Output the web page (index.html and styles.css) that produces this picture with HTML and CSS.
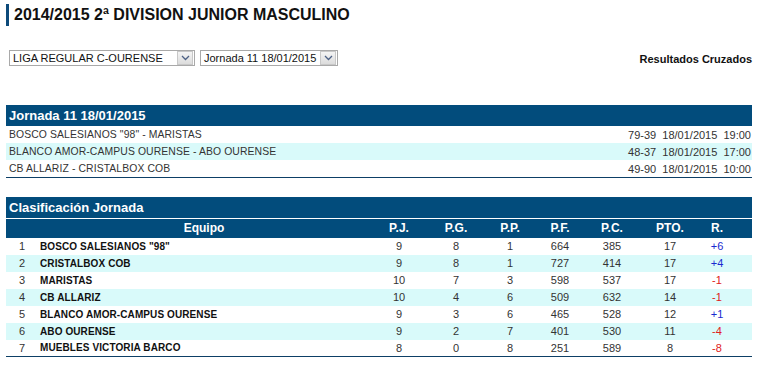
FILE: index.html
```html
<!DOCTYPE html>
<html>
<head>
<meta charset="utf-8">
<link rel="stylesheet" href="styles.css">
</head>
<body>
<div class="page">
  <h1 class="title">2014/2015 2ª DIVISION JUNIOR MASCULINO</h1>
  <div class="filters">
    <div class="selects">
      <div class="select sel1"><span class="sel-text">LIGA REGULAR C-OURENSE</span><span class="sel-btn"><svg width="9" height="6" viewBox="0 0 9 6"><path d="M1 1 L4.5 4.5 L8 1" fill="none" stroke="#4d6185" stroke-width="1.3"/></svg></span></div>
      <div class="select sel2"><span class="sel-text">Jornada 11 18/01/2015</span><span class="sel-btn"><svg width="9" height="6" viewBox="0 0 9 6"><path d="M1 1 L4.5 4.5 L8 1" fill="none" stroke="#4d6185" stroke-width="1.3"/></svg></span></div>
    </div>
    <a class="cross">Resultados Cruzados</a>
  </div>

  <section class="block results">
    <div class="block-head">Jornada 11 18/01/2015</div>
    <div class="match"><span class="teams">BOSCO SALESIANOS "98" - MARISTAS</span><span class="res">79-39&nbsp;&nbsp;18/01/2015&nbsp;&nbsp;19:00</span></div>
    <div class="match alt"><span class="teams">BLANCO AMOR-CAMPUS OURENSE - ABO OURENSE</span><span class="res">48-37&nbsp;&nbsp;18/01/2015&nbsp;&nbsp;17:00</span></div>
    <div class="match"><span class="teams">CB ALLARIZ - CRISTALBOX COB</span><span class="res">49-90&nbsp;&nbsp;18/01/2015&nbsp;&nbsp;10:00</span></div>
  </section>

  <section class="block standings">
    <div class="block-head">Clasificación Jornada</div>
    <table class="tbl">
      <colgroup>
        <col class="c-rank"><col class="c-team"><col class="c-pj"><col class="c-pg"><col class="c-pp"><col class="c-pf"><col class="c-pc"><col class="c-pto"><col class="c-r"><col class="c-fill">
      </colgroup>
      <thead>
        <tr><th></th><th>Equipo</th><th>P.J.</th><th>P.G.</th><th>P.P.</th><th>P.F.</th><th>P.C.</th><th>PTO.</th><th>R.</th><th></th></tr>
      </thead>
      <tbody>
        <tr><td>1</td><td class="team">BOSCO SALESIANOS "98"</td><td>9</td><td>8</td><td>1</td><td>664</td><td>385</td><td>17</td><td class="pos">+6</td><td></td></tr>
        <tr class="alt"><td>2</td><td class="team">CRISTALBOX COB</td><td>9</td><td>8</td><td>1</td><td>727</td><td>414</td><td>17</td><td class="pos">+4</td><td></td></tr>
        <tr><td>3</td><td class="team">MARISTAS</td><td>10</td><td>7</td><td>3</td><td>598</td><td>537</td><td>17</td><td class="neg">-1</td><td></td></tr>
        <tr class="alt"><td>4</td><td class="team">CB ALLARIZ</td><td>10</td><td>4</td><td>6</td><td>509</td><td>632</td><td>14</td><td class="neg">-1</td><td></td></tr>
        <tr><td>5</td><td class="team">BLANCO AMOR-CAMPUS OURENSE</td><td>9</td><td>3</td><td>6</td><td>465</td><td>528</td><td>12</td><td class="pos">+1</td><td></td></tr>
        <tr class="alt"><td>6</td><td class="team">ABO OURENSE</td><td>9</td><td>2</td><td>7</td><td>401</td><td>530</td><td>11</td><td class="neg">-4</td><td></td></tr>
        <tr><td>7</td><td class="team">MUEBLES VICTORIA BARCO</td><td>8</td><td>0</td><td>8</td><td>251</td><td>589</td><td>8</td><td class="neg">-8</td><td></td></tr>
      </tbody>
    </table>
  </section>
</div>
</body>
</html>
```

FILE: styles.css
```css
* { box-sizing: border-box; }
html, body { margin: 0; padding: 0; background: #fff; }
body { font-family: "Liberation Sans", Arial, sans-serif; color: #222; }
.page { width: 759px; padding: 4px 7px 0 6px; }

.title {
  margin: 0;
  height: 22px;
  border-left: 3px solid #0d4a7a;
  padding-left: 5px;
  font-size: 16px;
  line-height: 22px;
  font-weight: bold;
  color: #111;
}

.filters {
  display: flex;
  justify-content: space-between;
  align-items: center;
  margin-top: 24px;
  height: 16px;
}
.selects { display: flex; gap: 5px; padding-left: 3px; }
.select {
  display: flex;
  align-items: center;
  height: 16px;
  border: 1px solid #a9a9a9;
  font-size: 11px;
  color: #111;
  background: #fff;
}
.sel1 { width: 186px; }
.sel2 { width: 138px; }
.sel-text { flex: 1; padding-left: 3px; white-space: nowrap; overflow: hidden; }
.sel-btn {
  width: 16px; height: 14px;
  margin-right: 1px;
  background: linear-gradient(#f4f4f4, #dcdcdc);
  border: 1px solid #c8c8c8;
  display: flex; align-items: center; justify-content: center;
}
.cross { font-size: 11px; font-weight: bold; color: #111; padding-top: 2px; }

.block { margin-top: 39px; }
.standings { margin-top: 19px; }
.block-head {
  background: #024c7c;
  color: #fff;
  font-size: 13px;
  font-weight: bold;
  height: 21px;
  line-height: 21px;
  padding-left: 3px;
}
.match {
  display: flex;
  justify-content: space-between;
  align-items: center;
  height: 17px;
  font-size: 11px;
  padding: 0 1px 0 3px;
  color: #333;
}
.match .teams { font-size: 10.4px; letter-spacing: 0.1px; }
.match.alt { background: #d9fafa; }
.results { border-bottom: 1px solid #0d3f66; }

.tbl {
  width: 746px;
  border-collapse: collapse;
  table-layout: fixed;
  border-bottom: 1px solid #0d3f66;
}
.c-rank { width: 32px; }
.c-team { width: 332px; }
.c-pj { width: 58px; }
.c-pg { width: 56px; }
.c-pp { width: 52px; }
.c-pf { width: 48px; }
.c-pc { width: 56px; }
.c-pto { width: 60px; }
.c-r { width: 34px; }
.c-fill { width: 18px; }
.tbl thead tr { background: #024c7c; border-top: 1px solid #fff; }
.tbl th {
  color: #fff;
  font-size: 12px;
  font-weight: bold;
  height: 19px;
  padding: 0;
  text-align: center;
}
.tbl td {
  height: 17px;
  padding: 0;
  font-size: 11px;
  text-align: center;
  color: #333;
}
.tbl td.team { text-align: left; padding-left: 2px; font-weight: bold; font-size: 10px; letter-spacing: 0.1px; color: #111; }
.tbl tr.alt td { background: #d9fafa; }
.tbl td.pos { color: #1a2ad0; }
.tbl td.neg { color: #e02020; }
```
